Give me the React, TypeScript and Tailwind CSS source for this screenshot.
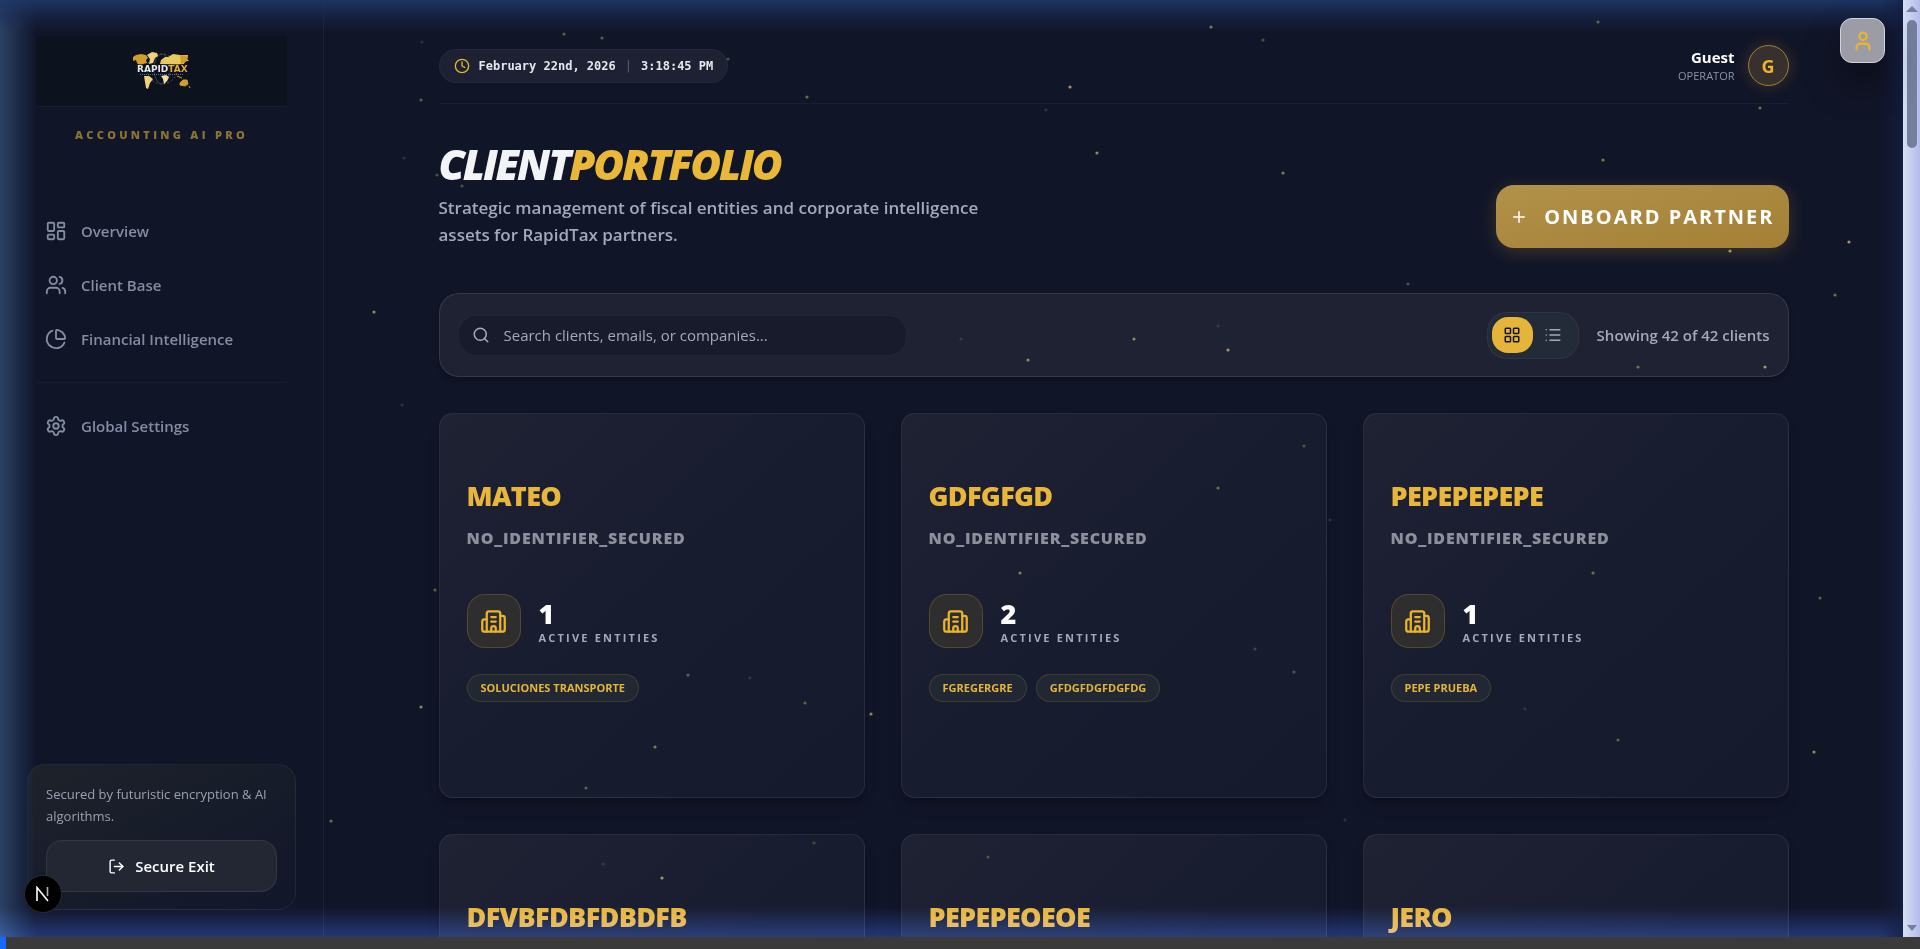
import React from 'react';
import { LayoutDashboard, Users, PieChart, Settings, LogOut, Clock, Plus, Search, LayoutGrid, List, Building2, User } from 'lucide-react';

interface Client {
  name: string;
  identifier?: string;
  entities: string[];
}

const clients: Client[] = [
  { name: 'MATEO', identifier: 'NO_IDENTIFIER_SECURED', entities: ['SOLUCIONES TRANSPORTE'] },
  { name: 'GDFGFGD', identifier: 'NO_IDENTIFIER_SECURED', entities: ['FGREGERGRE', 'GFDGFDGFDGFDG'] },
  { name: 'PEPEPEPEPE', identifier: 'NO_IDENTIFIER_SECURED', entities: ['PEPE PRUEBA'] },
  { name: 'DFVBFDBFDBDFB', entities: [] },
  { name: 'PEPEPEOEOE', entities: [] },
  { name: 'JERO', entities: [] },
];

// x, y, opacity
const stars: [number, number, number][] = [
  [1211, 27, 0.8], [1598, 22, 0.7], [1070, 87, 0.9], [1097, 153, 0.8], [1283, 173, 0.7], [1603, 160, 0.7],
  [1263, 40, 0.4], [1760, 108, 0.6], [1849, 242, 0.9], [1835, 295, 0.6], [1730, 251, 0.9], [374, 312, 0.8],
  [421, 100, 0.5], [422, 42, 0.2], [404, 158, 0.2], [437, 175, 0.4], [462, 186, 0.4], [564, 34, 0.5],
  [602, 38, 0.5], [728, 59, 0.4], [807, 97, 0.6], [1046, 110, 0.2], [1028, 360, 0.8], [1134, 339, 0.8],
  [1228, 350, 0.9], [961, 339, 0.2], [1218, 326, 0.2], [1638, 367, 0.6], [1765, 367, 0.9], [402, 405, 0.2],
  [435, 590, 0.5], [421, 707, 0.8], [871, 714, 0.8], [688, 675, 0.5], [750, 678, 0.2], [805, 703, 0.5],
  [655, 747, 0.7], [586, 788, 0.5], [331, 821, 0.6], [662, 878, 0.9], [603, 864, 0.2], [814, 843, 0.3],
  [1020, 573, 0.7], [1218, 488, 0.6], [1593, 573, 0.6], [1820, 598, 0.5], [1618, 740, 0.5], [1814, 752, 0.8],
  [988, 857, 0.4], [1408, 284, 0.4], [1304, 446, 0.4], [1330, 520, 0.2], [1294, 672, 0.4], [1255, 649, 0.3],
  [1345, 820, 0.2], [1525, 709, 0.2],
];

const Logo: React.FC = () => (
  <svg width="60" height="38" viewBox="0 0 60 38" role="img" aria-label="RapidTax">
    <circle cx="30" cy="17" r="15" fill="none" stroke="#4b5563" strokeDasharray="2 2" />
    <ellipse cx="30" cy="17" rx="8" ry="15" fill="none" stroke="#374151" />
    <path d="M1 5l3-2 5-1 5 1 2 3-2 2 1 3-4 1-3 2-3-3-1-3-3 1z" fill="#d39a2c" />
    <path d="M15 3l5-3 5 1 1 3-3 2-2 5-4 1 1-5z" fill="#efd27a" />
    <path d="M28 12l1-4 4-3 3 0 5-3 7 1 8 0-1 4 2 2-4 0-1 3-6 1z" fill="#e8c860" />
    <path d="M48 3l8 1-1 5-3 2-3 1z" fill="#d39a2c" />
    <path d="M12 24l5 0 4 3-3 4-2 6-2-1-1-6z" fill="#efd27a" />
    <path d="M29 24l5-1 3 2-2 4-3 3-1-5z" fill="#f3e09b" />
    <path d="M45 24l5 2M48 31l3-3 4 0 1 4-3 2-5-1zM57 34l1 2" fill="#d39a2c" stroke="#d39a2c" />
    <path d="M8 22.500h43" stroke="#8b93a9" strokeDasharray="1 1" opacity="0.7" />
    <rect x="5" y="12" width="54" height="9" fill="#0c131f" opacity="0.6" />
    <text x="5" y="20" fontSize="9" fontWeight="700" fill="#e5e7eb" fontFamily="DejaVu Sans, sans-serif">
      RAPID<tspan fill="#e8a93b">TAX</tspan>
    </text>
  </svg>
);

const NavItem: React.FC<{ icon: React.ElementType; label: string }> = ({ icon: Icon, label }) => (
  <a href="#" className="flex items-center gap-[14px] h-[54px] px-[18px] text-[15px] font-semibold text-[#848ca2]">
    <Icon size={22} strokeWidth={2} />
    {label}
  </a>
);

const Sidebar: React.FC = () => (
  <aside className="w-[324px] shrink-0 flex flex-col justify-between border-r border-white/5 p-[27px]">
    <div>
      <div className="px-[9px] pt-[9px]">
        <div className="h-[71px] bg-[#0c131f] flex items-center justify-center border-b border-white/5">
          <Logo />
        </div>
        <p className="mt-[20px] text-center text-[11px] leading-4 font-extrabold tracking-[0.3em] text-[#8d7330]">ACCOUNTING AI PRO</p>
      </div>
      <nav className="mt-[61px]">
        <NavItem icon={LayoutDashboard} label="Overview" />
        <NavItem icon={Users} label="Client Base" />
        <NavItem icon={PieChart} label="Financial Intelligence" />
        <div className="mx-[9px] my-[16px] border-t border-white/3"></div>
        <NavItem icon={Settings} label="Global Settings" />
      </nav>
    </div>
    <div className="rounded-[18px] border border-white/5 bg-linear-to-br from-[#1d222a] to-[#12162a] p-[18px] pb-[17px]">
      <p className="text-[13px] leading-[22px] text-[#9aa0b0]">Secured by futuristic encryption &amp; AI algorithms.</p>
      <button className="mt-[13px] w-full h-[52px] rounded-[16px] border border-white/8 bg-[#222733] flex items-center justify-center gap-[10px] text-[15px] font-semibold text-white">
        <LogOut size={17} />
        Secure Exit
      </button>
    </div>
  </aside>
);

const ClientCard: React.FC<{ client: Client }> = ({ client }) => (
  <article className="h-[385px] rounded-[14px] border border-white/7 bg-linear-to-br from-[#1e2233] via-[#181c2f] to-[#161a2d] shadow-lg shadow-black/20 px-[27px] pt-[62px]">
    <h3 className="text-[27px] leading-[40px] font-extrabold tracking-tight text-[#e8b63a]">{client.name}</h3>
    {client.identifier && (
      <p className="mt-[8px] text-base leading-[28px] font-extrabold tracking-wider text-[#8d909c]">{client.identifier}</p>
    )}
    {client.entities.length > 0 && (
      <>
        <div className="mt-[42px] flex items-center gap-[18px]">
          <div className="size-[54px] rounded-[18px] border border-[#e5b53a]/20 bg-[#2f2e2e] flex items-center justify-center text-[#eab42f]">
            <Building2 size={27} />
          </div>
          <div className="pt-[4px]">
            <div className="text-[27px] leading-[30px] font-black text-white">{client.entities.length}</div>
            <div className="text-[11px] leading-[18px] font-bold tracking-[0.2em] text-[#a3a9bc]">ACTIVE ENTITIES</div>
          </div>
        </div>
        <div className="mt-[26px] flex flex-wrap gap-[9px]">
          {client.entities.map((entity) => (
            <span key={entity} className="rounded-full border border-[#e5b53a]/15 bg-[#222833] px-[13px] text-[11px] leading-[26px] font-bold text-[#e5b53a]">
              {entity}
            </span>
          ))}
        </div>
      </>
    )}
  </article>
);

const App: React.FC = () => {
  const [query, setQuery] = React.useState('');

  return (
    <div className="h-screen flex flex-col overflow-hidden bg-[#3a3a3a] font-['Open_Sans','Noto_Sans',sans-serif]">
      <div className="relative flex-1 min-h-0 flex bg-[#111528]">
        <Sidebar />

        <main className="flex-1 min-w-0 overflow-hidden px-[36px]">
          <div className="max-w-[1350px] mx-auto">
            <header className="h-[104px] pt-[28px] flex items-center justify-between border-b border-white/4">
              <div className="flex items-center gap-[9px] h-[34px] px-[14px] rounded-full border border-white/4 bg-[#1e2134] font-['DejaVu_Sans_Mono',monospace] text-xs font-bold text-[#e5e7eb]">
                <Clock size={16} className="text-[#d9b92f]" />
                <span>February 22nd, 2026</span>
                <span className="text-[#5b6072] font-normal">|</span>
                <span>3:18:45 PM</span>
              </div>
              <div className="flex items-center gap-[13px]">
                <div className="text-right">
                  <div className="text-[15px] leading-5 font-bold text-white">Guest</div>
                  <div className="text-[11px] leading-[18px] text-[#8b93a9]">OPERATOR</div>
                </div>
                <div className="size-[41px] rounded-full border border-[#a07f2c] bg-[#37302f] flex items-center justify-center text-lg font-bold text-[#eab42f] shadow-[0_0_15px_rgba(229,181,58,0.2)]">G</div>
              </div>
            </header>

            <section className="mt-[35px] flex items-end justify-between gap-6">
              <div>
                <h1 className="text-[42px] leading-[50px] font-extrabold italic tracking-tighter text-[#f3f4f6]">
                  CLIENT<span className="text-[#eab839]">PORTFOLIO</span>
                </h1>
                <p className="mt-[5px] max-w-[576px] text-[17px] leading-[27px] font-semibold text-[#a3a9bc]">
                  Strategic management of fiscal entities and corporate intelligence assets for RapidTax partners.
                </p>
              </div>
              <button className="h-[63px] rounded-[18px] bg-linear-to-br from-[#b29149] to-[#a38035] px-[14px] flex items-center gap-[16px] text-xl font-bold tracking-widest text-white shadow-[0_4px_18px_rgba(229,181,58,0.2)]">
                <Plus size={18} />
                ONBOARD PARTNER
              </button>
            </section>

            <section className="mt-[45px] h-[84px] rounded-[20px] border border-white/10 bg-[#1e2233] px-[18px] flex items-center justify-between shadow-md shadow-black/20">
              <label className="w-[449px] h-[41px] rounded-[18px] border border-white/5 bg-[#171b2c] flex items-center gap-[14px] px-[13px] text-[#a3a9bc]">
                <Search size={18} />
                <input
                  type="text"
                  aria-label="Search clients"
                  value={query}
                  onChange={(e) => setQuery(e.target.value)}
                  placeholder="Search clients, emails, or companies..."
                  className="flex-1 bg-transparent text-[15px] outline-none placeholder:text-[#a3a9bc]"
                />
              </label>
              <div className="flex items-center gap-[18px]">
                <div className="h-[47px] p-[4px] rounded-[20px] border border-white/5 bg-[#232a38] flex items-center">
                  <button aria-label="Grid view" className="w-[41px] h-[36px] rounded-[16px] bg-[#e5b53a] text-[#111528] flex items-center justify-center">
                    <LayoutGrid size={18} />
                  </button>
                  <button aria-label="List view" className="w-[41px] h-[36px] text-[#a3a9bc] flex items-center justify-center">
                    <List size={18} />
                  </button>
                </div>
                <span className="text-[15px] font-semibold text-[#a3a9bc]">Showing 42 of 42 clients</span>
              </div>
            </section>

            <section className="mt-[36px] grid grid-cols-3 gap-[36px]">
              {clients.map((client) => (
                <ClientCard key={client.name} client={client} />
              ))}
            </section>
          </div>
        </main>

        {/* Window scrollbar */}
        <div className="w-[17px] shrink-0 flex flex-col items-center justify-between bg-linear-to-r from-[#d6e0f2] to-[#b4bbec] py-[6px]">
          <div className="flex flex-col items-center gap-2">
            <svg width="12" height="6" viewBox="0 0 12 6"><path d="M6 0l6 6H0z" fill="#737f9b" /></svg>
            <div className="w-[10px] h-[128px] rounded-full bg-[#737f9b]"></div>
          </div>
          <svg width="10" height="6" viewBox="0 0 10 6"><path d="M0 0h10L5 6z" fill="#737f9b" /></svg>
        </div>

        {/* Star field */}
        <svg className="absolute inset-0 size-full pointer-events-none">
          {stars.map(([x, y, o]) => (
            <circle key={`${x}-${y}`} cx={x} cy={y} r="1.6" fill="#b5a45a" opacity={o} />
          ))}
        </svg>

        {/* Edge glow */}
        <div className="absolute inset-y-0 left-0 w-[36px] pointer-events-none bg-linear-to-r from-[#2b4265] via-[#1f304f]/80 to-transparent"></div>
        <div className="absolute top-0 left-0 right-[17px] h-[32px] pointer-events-none bg-linear-to-b from-[#1e3768]/90 via-[#1a2d58]/50 to-transparent"></div>
        <div className="absolute bottom-0 left-0 right-[17px] h-[30px] pointer-events-none mix-blend-screen bg-linear-to-t from-[#14265a] via-[#14265a]/50 to-transparent"></div>
        <div className="absolute inset-y-0 right-[17px] w-[24px] pointer-events-none bg-linear-to-l from-[#131e44]/70 to-transparent"></div>

        <button aria-label="Account" className="absolute top-[18px] right-[35px] size-[45px] rounded-[12px] border border-[#d1d5db] bg-[#9b9ca6] flex items-center justify-center text-[#eab42f] shadow-[0_20px_36px_rgba(0,0,0,0.4)]">
          <User size={22} strokeWidth={2.5} />
        </button>
        <button aria-label="Open dev tools" className="absolute bottom-[24px] left-[24px] size-[38px] rounded-full border border-[#2a2a2a] bg-black flex items-center justify-center text-white">
          <svg width="16" height="16" viewBox="0 0 16 16" fill="none" stroke="currentColor" strokeWidth="1.6">
            <path d="M2 15V1.500L13 15" />
            <path d="M12.500 1v9" opacity="0.7" />
          </svg>
        </button>
      </div>
      <div className="h-[12px] shrink-0">
        <div className="w-[6px] h-full bg-[#1668ff]"></div>
      </div>
    </div>
  );
};

export default App;
